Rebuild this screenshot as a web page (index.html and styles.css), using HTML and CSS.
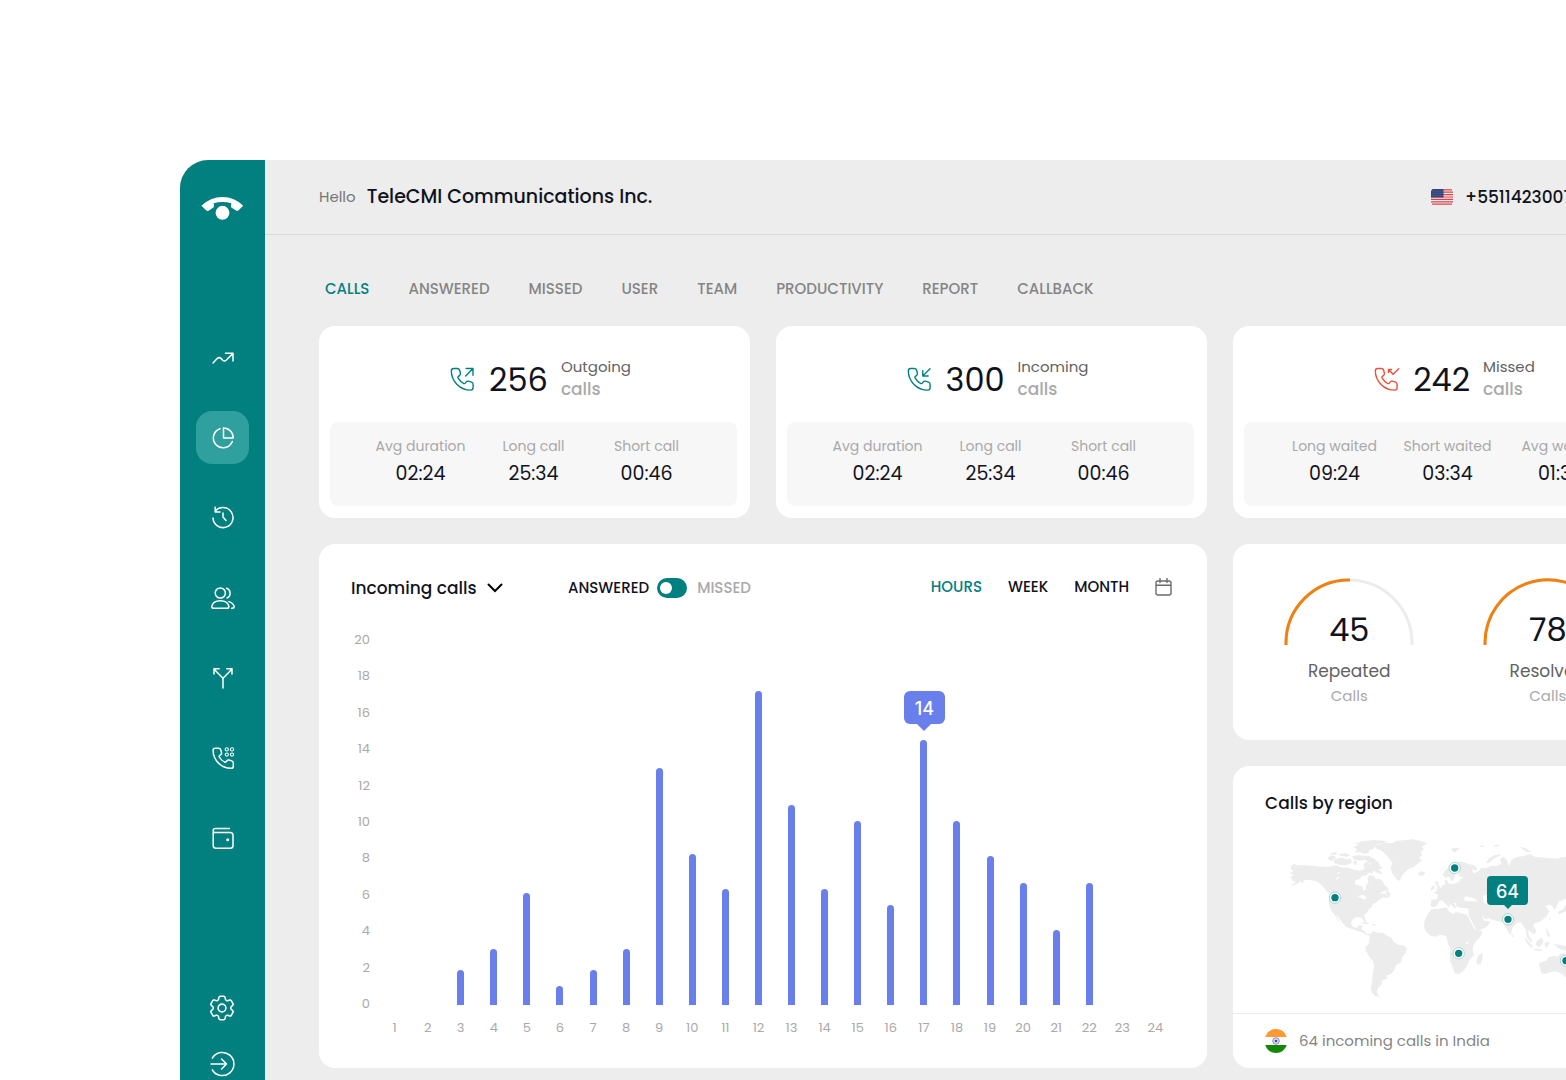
FILE: index.html
```html
<!DOCTYPE html>
<html lang="en">
<head>
<meta charset="utf-8">
<meta name="viewport" content="width=device-width, initial-scale=1">
<title>TeleCMI – Call analytics</title>
<link rel="stylesheet" href="styles.css">
</head>
<body>
<svg class="defs" aria-hidden="true">
  <symbol id="phone" viewBox="0 0 26 26">
    <path d="M5.2 3.2H8.6Q10.3 3.2 10.8 4.9L11.5 7.6Q11.8 9 10.6 9.8L9.6 10.5Q8.900 11.100 9.300 12Q11.3 15.5 14.700 17.200Q15.500 17.500 16.100 16.800L16.900 15.700Q17.700 14.700 19 15L21.8 15.9Q23.3 16.4 23.3 18V21.2Q23.3 23.3 21.1 23.3C11.2 23.3 3.1 15.2 3.1 5.3Q3.1 3.2 5.2 3.2Z"/>
  </symbol>
</svg>
<div class="app">
  <aside class="sidebar">
    <a class="logo" href="#" aria-label="TeleCMI home">
      <svg viewBox="90 138 134 76" aria-hidden="true"><path d="M93 168Q120 141 157 141Q194 141 220 168L206 181Q202 185 197 181L184 173Q181 171 183 166L184 160Q157 152 130 160L131 167Q132 171 129 173L116 182Q112 185 107 181Z"/><circle cx="157" cy="189" r="21"/></svg>
    </a>
    <nav class="side-nav" aria-label="Main">
      <a href="#" aria-label="Trends"><svg class="icon" viewBox="0 0 26 26"><path d="M3 18l4.2-4.4q2-1.9 4 0l1.2 1.4q2 1.9 4 0L23 8.4M15.5 8.3H23V16"/></svg></a>
      <a class="current" href="#" aria-label="Analytics" aria-current="page"><svg class="icon" viewBox="0 0 26 26"><path d="M13.5 3A9.8 9.8 0 0 1 23.3 12.9H13.5ZM10 3.7A9.8 9.8 0 1 0 22.3 16.5"/></svg></a>
      <a href="#" aria-label="History"><svg class="icon" viewBox="0 0 26 26"><path d="M3 13A10 10 0 1 0 5.2 6.300M5.2 2.3V7.100H10M13 7.900V12.100L16 15.500"/></svg></a>
      <a href="#" aria-label="Users"><svg class="icon" viewBox="0 0 26 26"><circle cx="10.3" cy="8" r="5.1"/><path d="M16.6 3.2A5.3 5.3 0 0 1 17 13M1.8 21.4Q3 15.8 10.3 15.8T18.9 21.4Q18.9 23.2 17.2 23.2H3.6Q1.8 23.2 1.8 21.4ZM19 16.6Q23.4 18.2 24.2 21.4Q24.2 23.2 21.6 23.2"/></svg></a>
      <a href="#" aria-label="Routing"><svg class="icon" viewBox="0 0 26 26"><path d="M13 23V14.4Q13 13.4 12.2 12.4L4.2 4.2M13 14.4Q13 13.4 13.8 12.4L21.8 4.2M4 9V3.8H9.2M16.8 3.8H22V9"/></svg></a>
      <a href="#" aria-label="Dialer"><svg class="icon" viewBox="0 0 26 26"><use href="#phone"/><g class="keys"><circle cx="16.8" cy="4.4" r="1.600"/><circle cx="22" cy="4.4" r="1.600"/><circle cx="16.8" cy="9.600" r="1.600"/><circle cx="22" cy="9.600" r="1.600"/></g></svg></a>
      <a href="#" aria-label="Wallet"><svg class="icon" viewBox="0 0 26 26"><path d="M19.4 3.4H5.4Q3.2 3.4 3.2 5.5V20.4Q3.2 23.2 6 23.2H20.2Q23 23.2 23 20.4V10.4Q23 7.6 20.2 7.6H5.4Q3.2 7.6 3.2 5.5"/><circle class="dot" cx="17.7" cy="14.8" r="1.5"/></svg></a>
    </nav>
    <div class="side-foot">
      <a href="#" aria-label="Settings"><svg class="icon gear" viewBox="2 2 20 20"><path d="M9.594 3.94c.09-.542.56-.94 1.11-.94h2.593c.55 0 1.02.398 1.11.94l.213 1.281c.063.374.313.686.645.87.074.04.147.083.22.127.325.196.72.257 1.075.124l1.217-.456a1.125 1.125 0 0 1 1.37.49l1.296 2.247a1.125 1.125 0 0 1-.26 1.431l-1.003.827c-.293.241-.438.613-.43.992a7.723 7.723 0 0 1 0 .255c-.008.378.137.75.43.991l1.004.827c.424.35.534.955.26 1.43l-1.298 2.247a1.125 1.125 0 0 1-1.369.491l-1.217-.456c-.355-.133-.75-.072-1.076.124a6.47 6.47 0 0 1-.22.128c-.331.183-.581.495-.644.869l-.213 1.281c-.09.543-.56.94-1.11.94h-2.594c-.55 0-1.019-.398-1.11-.94l-.213-1.281c-.062-.374-.312-.686-.644-.87a6.52 6.52 0 0 1-.22-.127c-.325-.196-.72-.257-1.076-.124l-1.217.456a1.125 1.125 0 0 1-1.369-.49l-1.297-2.247a1.125 1.125 0 0 1 .26-1.431l1.004-.827c.292-.24.437-.613.43-.991a6.932 6.932 0 0 1 0-.255c.007-.38-.138-.751-.43-.992l-1.004-.827a1.125 1.125 0 0 1-.26-1.43l1.297-2.247a1.125 1.125 0 0 1 1.37-.491l1.216.456c.356.133.751.072 1.076-.124.072-.044.146-.086.22-.128.332-.183.582-.495.644-.869l.214-1.28Z"/><circle cx="12" cy="12" r="3"/></svg></a>
      <a href="#" aria-label="Sign out"><svg class="icon" viewBox="0 0 26 26"><path d="M3.4 7A11.6 11.6 0 1 1 3.4 19M2 13H17.5M12.6 8L17.5 13L12.6 18"/></svg></a>
    </div>
  </aside>

  <main class="main">
    <header class="topbar">
      <p class="hello">Hello</p>
      <h1>TeleCMI Communications Inc.</h1>
      <div class="line-number">
        <svg class="flag-us" viewBox="0 0 22 16" aria-hidden="true">
          <rect width="22" height="16" rx="3" fill="#f4eeee"/>
          <path d="M1 .8H21M0 3.2H22M0 5.6H22M0 8H22M0 10.4H22M0 12.8H22M1 15.2H21" stroke="#d8434e" stroke-width="1.2"/>
          <path d="M3 0H12.500V8.600H0V3Q0 0 3 0Z" fill="#33477c"/>
          <path d="M1.500 2.200H12M1.500 4.400H12M1.500 6.600H12" stroke="#7484ab" stroke-width=".7" stroke-dasharray=".8 1.200"/>
        </svg>
        <span>+55114230077</span>
      </div>
    </header>

    <div class="content">
      <nav class="tabs" aria-label="Reports">
        <a class="current" href="#">CALLS</a>
        <a href="#">ANSWERED</a>
        <a href="#">MISSED</a>
        <a href="#">USER</a>
        <a href="#">TEAM</a>
        <a href="#">PRODUCTIVITY</a>
        <a href="#">REPORT</a>
        <a href="#">CALLBACK</a>
      </nav>

      <div class="board">
        <section class="card stat">
          <div class="stat-head">
            <svg class="icon" viewBox="0 0 26 26" aria-hidden="true"><use href="#phone"/><path d="M16.400 10.200L23 3.500M16.800 3.300H23.200V9.500"/></svg>
            <strong>256</strong>
            <h2>Outgoing <span>calls</span></h2>
          </div>
          <dl class="metrics">
            <div><dt>Avg duration</dt><dd>02:24</dd></div>
            <div><dt>Long call</dt><dd>25:34</dd></div>
            <div><dt>Short call</dt><dd>00:46</dd></div>
          </dl>
        </section>
        <section class="card stat">
          <div class="stat-head">
            <svg class="icon" viewBox="0 0 26 26" aria-hidden="true"><use href="#phone"/><path d="M23.200 3.400L16.600 10.100M16.500 5.400V10.200H21.500"/></svg>
            <strong>300</strong>
            <h2>Incoming <span>calls</span></h2>
          </div>
          <dl class="metrics">
            <div><dt>Avg duration</dt><dd>02:24</dd></div>
            <div><dt>Long call</dt><dd>25:34</dd></div>
            <div><dt>Short call</dt><dd>00:46</dd></div>
          </dl>
        </section>
        <section class="card stat missed">
          <div class="stat-head">
            <svg class="icon" viewBox="0 0 26 26" aria-hidden="true"><use href="#phone"/><path d="M24.800 3.400L19.600 8.500L15.500 4.400M15.300 7V4.200H18.200"/></svg>
            <strong>242</strong>
            <h2>Missed <span>calls</span></h2>
          </div>
          <dl class="metrics">
            <div><dt>Long waited</dt><dd>09:24</dd></div>
            <div><dt>Short waited</dt><dd>03:34</dd></div>
            <div><dt>Avg waited</dt><dd>01:34</dd></div>
          </dl>
        </section>

        <section class="card chart-card">
          <div class="chart-head">
            <div class="picker">
              <select aria-label="Call type"><option>Incoming calls</option><option>Outgoing calls</option></select>
              <svg viewBox="0 0 16 10" aria-hidden="true"><path d="M1.500 1.500L8 8L14.500 1.500"/></svg>
            </div>
            <label class="switch">ANSWERED <input type="checkbox" role="switch"> <span>MISSED</span></label>
            <div class="ranges">
              <button type="button" class="current">HOURS</button>
              <button type="button">WEEK</button>
              <button type="button">MONTH</button>
              <button type="button" aria-label="Pick dates"><svg viewBox="0 0 17 18"><path d="M3 3H14Q16 3 16 5V15Q16 17 14 17H3Q1 17 1 15V5Q1 3 3 3ZM1 7.200H16M5 .5V4.500M12 .5V4.500"/></svg></button>
            </div>
          </div>
          <div class="chart">
            <ol class="y-axis"><li>20</li><li>18</li><li>16</li><li>14</li><li>12</li><li>10</li><li>8</li><li>6</li><li>4</li><li>2</li><li>0</li></ol>
            <ol class="plot">
              <li><div class="slot"></div>1</li>
              <li><div class="slot"></div>2</li>
              <li><div class="slot"><i style="height:9.500%"></i></div>3</li>
              <li><div class="slot"><i style="height:15.300%"></i></div>4</li>
              <li><div class="slot"><i style="height:30.700%"></i></div>5</li>
              <li><div class="slot"><i style="height:5.200%"></i></div>6</li>
              <li><div class="slot"><i style="height:9.500%"></i></div>7</li>
              <li><div class="slot"><i style="height:15.300%"></i></div>8</li>
              <li><div class="slot"><i style="height:65.100%"></i></div>9</li>
              <li><div class="slot"><i style="height:41.400%"></i></div>10</li>
              <li><div class="slot"><i style="height:31.800%"></i></div>11</li>
              <li><div class="slot"><i style="height:86.200%"></i></div>12</li>
              <li><div class="slot"><i style="height:54.900%"></i></div>13</li>
              <li><div class="slot"><i style="height:31.800%"></i></div>14</li>
              <li><div class="slot"><i style="height:50.500%"></i></div>15</li>
              <li><div class="slot"><i style="height:27.500%"></i></div>16</li>
              <li><div class="slot"><i style="height:72.800%"><b class="tip">14</b></i></div>17</li>
              <li><div class="slot"><i style="height:50.500%"></i></div>18</li>
              <li><div class="slot"><i style="height:40.900%"></i></div>19</li>
              <li><div class="slot"><i style="height:33.500%"></i></div>20</li>
              <li><div class="slot"><i style="height:20.600%"></i></div>21</li>
              <li><div class="slot"><i style="height:33.500%"></i></div>22</li>
              <li><div class="slot"></div>23</li>
              <li><div class="slot"></div>24</li>
            </ol>
          </div>
        </section>

        <div class="side-column">
          <section class="card gauges">
            <div class="gauge">
              <div class="dial">
                <svg viewBox="0 0 130 68" aria-hidden="true"><path class="track" d="M2 67V65A63 63 0 0 1 128 65V67"/><path class="value" d="M2 67V65A63 63 0 0 1 66 2"/></svg>
                <strong>45</strong>
              </div>
              <h3>Repeated</h3>
              <p>Calls</p>
            </div>
            <div class="gauge">
              <div class="dial">
                <svg viewBox="0 0 130 68" aria-hidden="true"><path class="track" d="M2 67V65A63 63 0 0 1 128 65V67"/><path class="value" d="M2 67V65A63 63 0 0 1 113 24"/></svg>
                <strong>78</strong>
              </div>
              <h3>Resolved</h3>
              <p>Calls</p>
            </div>
          </section>

          <section class="card region">
            <h2>Calls by region</h2>
            <div class="map">
              <svg viewBox="195 225 1110 495" role="img" aria-label="World map">
                <g class="land">
                  <path d="M212 318L222 312L234 316L262 316L290 319L320 321L345 316L370 324L382 322L395 328L420 332L434 326L430 316L436 306L446 306L449 318L462 328L458 340L446 338L440 346L425 348L420 356L405 362L404 372L420 378L428 380L430 392L437 389L438 376L446 366L442 356L448 346L462 347L468 358L478 356L488 364L494 376L506 386L504 392L490 394L478 402L494 400L500 406L513 408L498 414L490 412L476 420L468 428L458 432L455 442L446 448L444 456L432 466L438 484L434 488L426 474L410 471L398 478L393 490L398 500L410 504L418 495L428 497L424 508L434 514L438 522L452 522L448 527L436 524L426 516L412 513L396 507L378 500L367 488L356 473L348 462L352 474L360 488L352 480L344 464L334 452L327 432L328 412L334 404L318 392L306 376L290 364L272 360L255 360L246 370L240 364L234 370L222 376L208 380L228 366L220 364L211 352L222 344L209 341L220 332L212 326Z"/>
                  <path d="M322 295L332 286L348 290L346 297L333 303ZM345 298L366 292L376 298L390 296L396 304L391 312L374 316L356 314L340 308ZM329 281L348 276L352 282L338 285ZM356 282L376 280L392 286L380 290L362 288ZM400 262L416 254L404 250L430 244L462 240L490 242L502 246L480 250L466 256L462 266L448 270L446 278L436 282L418 276L404 278L412 268ZM396 288L416 286L448 288L462 296L476 308L480 318L488 324L476 328L488 342L474 340L458 330L446 318L452 310L436 300L420 302L400 298ZM402 302L412 304L408 316L400 312ZM438 312L444 318L438 322Z"/>
                  <path d="M464 258L490 248L516 250L530 242L560 240L576 238L606 244L622 250L604 260L612 266L602 276L606 288L596 292L606 302L594 310L582 320L564 328L552 340L544 350L540 362L532 360L524 350L516 338L512 322L518 310L508 296L498 284L486 272L470 266Z"/>
                  <path d="M594 342L602 334L616 337L612 345L600 348ZM496 398L504 392L513 405L506 409ZM420 488L436 486L450 492L438 493ZM454 492L470 494L462 498Z"/>
                  <path d="M450 522L460 514L474 518L488 518L500 526L515 534L522 546L534 554L550 556L561 566L556 580L546 592L544 606L528 616L522 632L510 644L500 646L500 656L488 660L484 674L474 684L470 696L478 710L466 708L456 698L452 684L457 664L458 640L463 618L458 602L448 590L438 574L436 562L446 552L448 536Z"/>
                  <path d="M634 448L655 446L680 442L686 454L700 462L708 456L728 461L742 464L750 482L758 496L768 510L787 514L783 528L768 544L760 556L758 570L762 586L748 600L742 616L730 634L716 642L704 640L698 622L690 602L689 584L692 566L684 552L682 540L678 528L664 524L645 530L628 526L616 512L612 498L614 480L624 462ZM787 578L788 590L782 612L772 614L769 604L774 588Z"/>
                  <path d="M632 438L634 420L652 418L654 404L640 398L652 392L662 386L668 376L676 374L674 362L681 358L684 370L700 372L716 366L722 356L732 352L720 350L714 344L718 330L712 326L704 336L706 348L700 360L694 364L688 350L676 354L668 344L674 334L688 320L702 308L722 304L738 310L762 316L772 324L768 332L756 328L760 340L772 336L784 324L800 324L812 318L830 318L844 312L840 298L852 290L862 302L866 320L874 300L888 292L910 288L930 282L944 290L980 294L1010 296L1036 290L1080 304L1120 308L1170 312L1220 318L1260 324L1270 336L1240 342L1225 360L1210 380L1205 366L1216 348L1190 350L1160 352L1130 360L1120 372L1120 396L1100 412L1090 396L1066 398L1050 412L1034 418L1018 424L1012 434L1004 450L998 440L990 434L976 438L988 454L978 472L962 484L944 490L938 496L950 512L944 522L934 518L926 508L926 526L938 544L932 546L920 530L918 510L908 496L902 486L890 490L878 502L874 514L874 526L866 518L856 500L850 488L838 484L826 482L806 474L796 478L785 466L792 482L812 484L806 494L794 504L772 514L764 500L754 482L746 468L746 446L736 444L722 444L710 440L708 430L700 428L708 440L704 446L694 434L684 426L678 422L692 434L686 442L672 426L664 420L656 426L650 438L640 442Z"/>
                  <path d="M634 382L642 374L644 386L632 392ZM644 366L652 362L656 376L664 388L648 394L652 382ZM798 308L808 294L824 286L844 282L838 288L820 296L808 308ZM692 268L704 263L722 264L712 270L704 278ZM898 260L916 264L934 276L920 276ZM776 258L796 256L786 262ZM820 256L840 254L830 260ZM988 470L992 478L988 484ZM976 502L984 514L992 530L982 528ZM912 532L926 544L940 562L932 562L920 548ZM950 544L964 534L970 540L966 554L956 562L948 554ZM938 566L960 568L968 574L944 571ZM974 548L990 546L982 562L976 562ZM1002 552L1018 554L1038 558L1066 574L1052 574L1026 570L1014 564ZM1012 456L1030 448L1040 430L1046 436L1038 454L1018 462ZM876 522L881 530L876 532Z"/>
                  <path d="M956 610L978 602L986 592L1000 588L1014 590L1022 580L1040 582L1046 596L1056 600L1062 584L1072 604L1088 622L1090 644L1076 664L1056 666L1040 654L1026 642L1008 634L990 636L978 642L964 640ZM1130 660L1140 668L1124 690L1112 698L1126 676Z"/>
                </g>
                <path class="sea" d="M730 418L738 408L748 412L762 414L774 424L754 424L738 424ZM788 408L800 404L804 416L808 430L796 432L790 420ZM740 462L746 466L764 500L768 512L758 498ZM738 548L744 546L744 552L738 552ZM352 352L358 350L356 356L346 360ZM362 338L352 342L354 336ZM414 408L428 404L440 412L432 420L424 414Z"/>
                <g class="pins">
                  <circle cx="345" cy="413" r="14"/><circle cx="704" cy="324" r="14"/><circle cx="864" cy="478" r="14"/><circle cx="716" cy="580" r="14"/><circle cx="1038" cy="602" r="14"/>
                </g>
                <g class="pin-rings">
                  <circle cx="345" cy="413" r="17"/><circle cx="704" cy="324" r="17"/><circle cx="864" cy="478" r="17"/><circle cx="716" cy="580" r="17"/><circle cx="1038" cy="602" r="17"/>
                </g>
              </svg>
              <b class="tip">64</b>
            </div>
            <p class="region-note">
              <svg viewBox="0 0 24 24" aria-hidden="true"><path d="M1.200 8A11.500 12 0 0 1 22.800 8Z" fill="#ff9933"/><path d="M1.200 16A11.500 12 0 0 0 22.800 16Z" fill="#138808"/><circle cx="12" cy="12" r="3.300" fill="#dcdcf2" stroke="#7676bf" stroke-width=".8"/><circle cx="12" cy="12" r="1.300" fill="#4a4aa5"/></svg>
              64 incoming calls in India
            </p>
          </section>
        </div>
      </div>
    </div>
  </main>
</div>
</body>
</html>
```
FILE: styles.css
```css
:root {
  --teal: #028080;
  --blue: #687fec;
  --ink: #11131c;
  --text: #626262;
  --muted: #a9a9a9;
  --tab: #858585;
  --ground: #ededed;
}

* { box-sizing: border-box; }

body {
  margin: 0;
  padding: 160px 0 0 180px;
  overflow-x: hidden;
  background: #fff;
  color: var(--ink);
  font: 400 15px/20px Poppins, Inter, "Noto Sans", sans-serif;
}

h1, h2, h3, p, dl, dd, ol { margin: 0; padding: 0; font-weight: 400; }
ol { list-style: none; }
a { color: inherit; text-decoration: none; }
button, select { padding: 0; border: 0; background: none; color: inherit; font: inherit; }
svg { display: block; }
.defs { position: absolute; width: 0; height: 0; }

.icon {
  width: 26px;
  height: 26px;
  fill: none;
  stroke: currentColor;
  stroke-width: 1.5;
  stroke-linecap: round;
  stroke-linejoin: round;
}
.icon.gear { stroke-width: 1.2; }
.icon .dot { fill: currentColor; stroke: none; }
.icon .keys { stroke-width: 1.1; }

/* The board runs past the right edge of the window */
.app {
  display: flex;
  width: calc(100vw - 28px);
  min-height: calc(100vh - 160px);
  background: var(--ground);
  border-top-left-radius: 28px;
}

.sidebar {
  display: flex;
  flex: none;
  flex-direction: column;
  align-items: center;
  width: 85px;
  padding: 36px 0 3px;
  background: var(--teal);
  color: #fff;
  border-top-left-radius: 28px;
}
.logo svg { width: 45px; height: 25px; fill: #fff; }
.side-nav { display: grid; gap: 27px; margin-top: 110px; }
.side-nav a { display: grid; place-items: center; width: 53px; height: 53px; border-radius: 16px; }
.side-nav .current { background: #30a09f; }
.side-foot { display: grid; gap: 30px; margin-top: auto; padding-right: 2px; }

.main { flex: 1; min-width: 0; }
.topbar {
  display: flex;
  align-items: center;
  height: 75px;
  padding: 0 54px;
  border-bottom: 1px solid #dadada;
}
.hello { color: #777; margin-right: 11px; }
h1 { font-size: 19px; font-weight: 500; }
.line-number {
  display: flex;
  align-items: center;
  gap: 12px;
  width: 233px;
  margin-left: auto;
  font-size: 17px;
  font-weight: 500;
}
.flag-us { width: 22px; height: 16px; }

.content { padding: 44px 54px 12px; }
.tabs { display: flex; gap: 39px; margin: 0 0 27px 6px; color: var(--tab); font-size: 15px; font-weight: 500; }
.tabs .current { color: var(--teal); }

.board { display: grid; grid-template-columns: repeat(3, minmax(0, 1fr)); gap: 26px; }
.card { background: #fff; border-radius: 16px; }

.stat { padding: 12px 13px 12px 11px; }
.stat-head { display: flex; align-items: center; justify-content: center; height: 84px; padding-left: 12px; color: var(--teal); }
.missed .stat-head { color: #e8513c; }
.stat-head .icon { width: 28px; height: 28px; margin-bottom: 2px; stroke-width: 1.3; }
.stat-head strong { margin: 0 13px; color: var(--ink); font-size: 32px; font-weight: 400; }
.stat-head h2 { padding-bottom: 4px; color: var(--text); font-size: 15px; line-height: 23px; }
.stat-head span { display: block; color: var(--muted); font-size: 17px; font-weight: 500; }
.metrics {
  display: grid;
  grid-template-columns: repeat(3, minmax(0, 1fr));
  padding: 14px 34px 18px;
  background: #f7f7f7;
  border-radius: 8px;
  text-align: center;
}
.metrics dt { color: var(--muted); font-size: 14px; white-space: nowrap; }
.metrics dd { margin-top: 4px; font-size: 19px; line-height: 28px; }

.chart-card { grid-column: span 2; padding: 32px 35px 32px 32px; }
.chart-head { display: flex; align-items: center; height: 24px; }
.picker { display: grid; align-items: center; width: 152px; margin-right: 65px; }
.picker > * { grid-area: 1 / 1; }
.picker select { appearance: none; font-size: 17px; font-weight: 500; line-height: 24px; }
.picker svg { justify-self: end; width: 16px; height: 10px; fill: none; stroke: #000; stroke-width: 2; stroke-linecap: round; pointer-events: none; }
.switch { display: flex; align-items: center; font-weight: 500; }
.switch input {
  display: flex;
  align-items: center;
  appearance: none;
  width: 30px;
  height: 20px;
  margin: 0 10px 0 8px;
  padding: 0 3px;
  background: var(--teal);
  border-radius: 10px;
}
.switch input::before { content: ""; width: 12px; height: 12px; background: #fff; border-radius: 50%; }
.switch input:checked { justify-content: flex-end; }
.switch span { color: var(--muted); }
.ranges { display: flex; align-items: center; gap: 26px; margin-left: auto; padding-bottom: 3px; font-weight: 500; }
.ranges .current { color: var(--teal); }
.ranges svg { width: 17px; height: 18px; fill: none; stroke: #6b6b6b; stroke-width: 1.4; stroke-linecap: round; }

.chart { display: flex; margin-top: 31px; color: var(--muted); font-size: 13px; font-weight: 300; line-height: 16px; }
.y-axis { display: flex; flex-direction: column; justify-content: space-between; width: 27px; height: 381px; padding: 1px 8px 0 0; text-align: right; }
.plot { display: grid; flex: 1; grid-template-columns: repeat(24, minmax(0, 1fr)); padding-top: 10px; text-align: center; }
.slot { display: flex; align-items: flex-end; justify-content: center; height: 364px; margin-bottom: 15px; }
.slot i { position: relative; width: 7px; background: var(--blue); border-radius: 4px 4px 0 0; font-style: normal; }

.tip {
  position: absolute;
  bottom: calc(100% + 16px);
  left: 50%;
  width: 41px;
  margin-left: -20px;
  padding-top: 3px;
  background: var(--blue);
  border-radius: 6px;
  color: #fff;
  font-family: Inter, sans-serif;
  font-size: 18px;
  font-weight: 500;
  line-height: 30px;
  text-align: center;
}
.tip::after {
  content: "";
  position: absolute;
  top: 100%;
  left: 50%;
  margin-left: -7px;
  border: 7px solid transparent;
  border-top-color: var(--blue);
  border-bottom: 0;
}

.side-column { display: grid; grid-template-rows: 196px auto; gap: 26px; }
.gauges { display: grid; grid-template-columns: 1fr 1fr; padding: 34px 17px; text-align: center; }
.gauge { display: grid; align-content: start; justify-items: center; }
.dial { display: grid; justify-items: center; align-items: end; }
.dial > * { grid-area: 1 / 1; }
.dial svg { width: 130px; height: 68px; fill: none; stroke-width: 3; }
.track { stroke: #ececec; }
.value { stroke: #f0800f; }
.dial strong { font-size: 32px; font-weight: 400; line-height: 32px; }
.gauge h3 { margin-top: 13px; color: var(--text); font-size: 17px; line-height: 24px; }
.gauge p { margin-top: 3px; color: var(--muted); }

.region { display: flex; flex-direction: column; }
.region h2 { padding: 25px 32px 20px; font-size: 17px; line-height: 24px; font-weight: 500; }
.map { position: relative; margin: 0 9px 0 52px; }
.map svg { width: 100%; }
.land { fill: #ececec; }
.sea { fill: #fff; }
.pins { fill: var(--teal); stroke: #fff; stroke-width: 6; }
.pin-rings { fill: none; stroke: #a9d8d7; stroke-width: 3; }
.map .tip { top: 25%; bottom: auto; left: 60%; background: var(--teal); border-radius: 4px; line-height: 26px; }
.map .tip::after { margin-left: -4px; border-width: 4px 4px 0; border-top-color: var(--teal); }
.region-note {
  display: flex;
  align-items: center;
  gap: 11px;
  margin-top: auto;
  padding: 15px 31px;
  border-top: 1px solid #ececec;
  color: #858585;
  line-height: 24px;
}
.region-note svg { width: 24px; height: 24px; }
```
